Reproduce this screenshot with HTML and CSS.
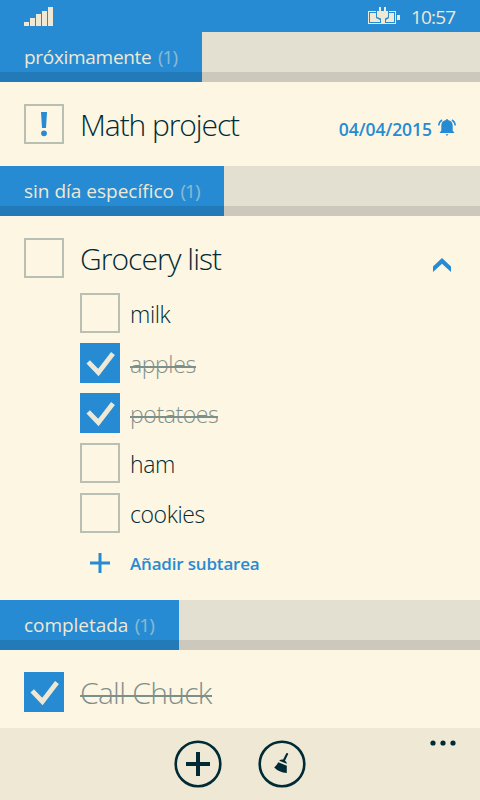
FILE: index.html
```html
<!DOCTYPE html>
<html lang="es">
<head>
<meta charset="utf-8">
<title>Tareas</title>
<link rel="stylesheet" href="styles.css">
</head>
<body>
<div class="phone">
  <header class="status">
    <svg class="signal" width="29" height="19" viewBox="0 0 29 19"><path d="M0 15h5v4H0zM6 11h5v8H6zM12 7h5v12h-5zM18 4h5v15h-5zM24 0h5v19h-5z"/></svg>
    <svg class="battery" width="32" height="18" viewBox="0 0 32 18"><path fill-rule="evenodd" d="M0 4h28v13H0zM1 5v11h26V5z"/><path d="M2 6h24v9H2zM29 8h3v5h-3z"/><path class="gap" d="M8 4h13v7l-3 2v2h-6v-2l-4-2z"/><path d="M11 0h2v4h3V0h2v4h2v6l-3 1.500V17h-4v-5.500L9 10V4h2z"/></svg>
    <span class="clock">10:57</span>
  </header>

  <section>
    <div class="group"><h2 class="tab tab-soon"><span class="name soon">próximamente</span><span class="count">(1)</span></h2></div>
    <div class="task">
      <span class="box"><svg width="36" height="36" viewBox="0 0 36 36"><path class="mark" d="M15 6h6l-1 16h-4z"/><circle class="mark" cx="18" cy="27.3" r="2.9"/></svg></span>
      <span class="title math">Math project</span>
      <span class="due">04/04/2015</span>
      <svg class="bell" width="18" height="18" viewBox="0 0 18 18"><path d="M8 1a1 1 0 0 1 2 0c3 .5 4.700 2.500 4.700 5.500v5l1.800 2.500h-15L3.300 11.500v-5C3.300 3.500 5 1.500 8 1zM7.500 15.300h3L9 17z"/><path class="ring" d="M.8 6.500C.9 4 2 2.200 4 1M17.200 6.500C17.100 4 16 2.200 14 1"/></svg>
    </div>
  </section>

  <section>
    <div class="group"><h2 class="tab tab-noday"><span class="name noday">sin día específico</span><span class="count">(1)</span></h2></div>
    <div class="task task-open">
      <span class="box"></span>
      <span class="title grocery">Grocery list</span>
      <svg class="chevron" width="18" height="14" viewBox="0 0 18 14"><path d="M0 8.500 9 0l9 8.500V14L9 5.700 0 14z"/></svg>
    </div>
    <ul class="subtasks">
      <li><span class="box"></span><span class="sub milk">milk</span></li>
      <li><span class="box checked"><svg width="40" height="40" viewBox="0 0 40 40"><path d="m8.200 18.800 10.200 10.700L33 10.500"/></svg></span><span class="sub done">apples</span></li>
      <li><span class="box checked"><svg width="40" height="40" viewBox="0 0 40 40"><path d="m8.200 18.800 10.200 10.700L33 10.500"/></svg></span><span class="sub done">potatoes</span></li>
      <li><span class="box"></span><span class="sub">ham</span></li>
      <li><span class="box"></span><span class="sub">cookies</span></li>
    </ul>
    <div class="add"><svg width="20" height="20" viewBox="0 0 20 20"><path d="M8.500 0h3v8.500H20v3h-8.500V20h-3v-8.500H0v-3h8.500z"/></svg><span class="add-label">Añadir subtarea</span></div>
  </section>

  <section>
    <div class="group"><h2 class="tab tab-done"><span class="name completed">completada</span><span class="count">(1)</span></h2></div>
    <div class="task task-last">
      <span class="box checked"><svg width="40" height="40" viewBox="0 0 40 40"><path d="m8.200 18.800 10.200 10.700L33 10.500"/></svg></span>
      <span class="title done chuck">Call Chuck</span>
    </div>
  </section>

  <footer class="appbar">
    <svg width="48" height="48" viewBox="0 0 48 48"><circle class="rim" cx="24" cy="24" r="22.300"/><path d="M22 12h4v10h10v4H26v10h-4V26H12v-4h10z"/></svg>
    <svg width="48" height="48" viewBox="0 0 48 48"><circle class="rim" cx="24" cy="24" r="22.300"/><path d="M28.300 13.300q1.300-.8 2 .5l-3.300 7q2 1.200 1.800 3l-7.600-3.100q1.500-1.500 3.900-1.200zM20.300 22.200l8.500 3.500v7.300q-8-.8-12.600-5.600 2.500-2 4.100-5.200z"/></svg>
    <svg class="more" width="26" height="6" viewBox="0 0 26 6"><circle cx="3" cy="3" r="2.600"/><circle cx="13" cy="3" r="2.600"/><circle cx="23" cy="3" r="2.600"/></svg>
  </footer>
</div>
</body>
</html>
```

FILE: styles.css
```css
* { box-sizing: border-box; }
body { margin: 0; background: #fdf6e3; color: #002b36; font-family: "Open Sans", "Noto Sans", sans-serif; }
svg { display: block; flex: none; }
.phone { width: 480px; height: 800px; display: flex; flex-direction: column; overflow: hidden; }
.status { height: 32px; background: #268bd2; display: flex; align-items: flex-start; padding: 7px 24px 0; fill: #eee8d5; color: #eee8d5; }
.battery { margin-left: 315px; }
.battery .gap { fill: #268bd2; }
.clock { margin-left: 11px; font-size: 19px; line-height: 20px; letter-spacing: -.85px; white-space: nowrap; }
.group { height: 50px; background: #e3e0d1; border-bottom: 10px solid #ccc9bc; }
.tab { margin: 0; height: 50px; background: #268bd2; border-bottom: 10px solid #227dbd; padding-left: 24px; font-size: 19px; font-weight: 400; line-height: 50px; color: #eee8d5; display: flex; white-space: nowrap; }
.tab { border-bottom-color: #227ab8; }
.tab-soon { width: 202px; }
.tab-noday { width: 224px; }
.tab-done { width: 179px; }
.soon { letter-spacing: -.3px; }
.completed { letter-spacing: -.05px; }
.count { margin-left: 6.500px; opacity: .5; letter-spacing: -1px; }
.task { height: 84px; padding: 22px 24px 0; display: flex; align-items: flex-start; }
.task-open { height: 77px; }
.task-last { height: 78px; }
.box { width: 40px; height: 40px; flex: none; border: 2px solid #b9bfb3; }
.mark { fill: #268bd2; }
.checked { border: 0; background: #268bd2; }
.checked path { fill: none; stroke: #eee8d5; stroke-width: 4.800; }
.title { margin-left: 16px; font-size: 30px; font-weight: 300; line-height: 42px; white-space: nowrap; }
.math { letter-spacing: -1.080px; }
.grocery { letter-spacing: -.95px; }
.chuck { letter-spacing: -.7px; }
.due { margin-left: auto; font-size: 17.500px; font-weight: 600; line-height: 50px; letter-spacing: -.05px; color: #268bd2; }
.bell { margin: 15px 0 0 6px; fill: #268bd2; }
.ring { fill: none; stroke: #268bd2; stroke-width: 1.500; }
.chevron { margin: 20px 5px 0 auto; fill: #268bd2; }
.subtasks { list-style: none; margin: 0; padding: 0 0 0 80px; display: grid; gap: 10px; }
.subtasks li { display: flex; height: 40px; }
.sub { margin-left: 10px; font-size: 23px; font-weight: 300; line-height: 42px; letter-spacing: -.4px; white-space: nowrap; }
.done { background: linear-gradient(#002b36, #002b36) 0 23px / 100% 2px no-repeat; opacity: .5; }
.add { height: 67px; padding: 20px 0 0 90px; display: flex; align-items: flex-start; fill: #268bd2; color: #268bd2; }
.add-label { margin-left: 20px; font-size: 17px; font-weight: 600; line-height: 22px; letter-spacing: -.18px; white-space: nowrap; }
.appbar { position: relative; height: 72px; background: #eee8d5; display: flex; justify-content: center; gap: 36px; padding-top: 12px; fill: #002b36; }
.rim { fill: none; stroke: #002b36; stroke-width: 2.600; }
.more { position: absolute; left: 430px; top: 12px; }
```
